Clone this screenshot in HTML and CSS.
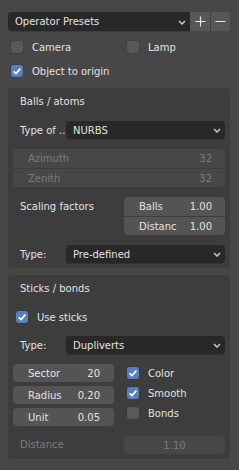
FILE: index.html
```html
<!DOCTYPE html>
<html>
<head>
<meta charset="utf-8">
<link rel="stylesheet" href="styles.css">
</head>
<body>
<div class="root">
  <div class="preset-row">
    <div class="dropdown preset">
      <span class="dd-text">Operator Presets</span>
      <svg class="chev" width="8" height="5" viewBox="0 0 8 5"><path d="M1 1 L4 4 L7 1" fill="none" stroke="#c8c8c8" stroke-width="1.5"/></svg>
    </div>
    <div class="tools">
      <div class="tool"><svg width="11" height="11" viewBox="0 0 11 11"><path d="M5.5 0.5 V10.5 M0.5 5.5 H10.5" stroke="#e6e6e6" stroke-width="1.2"/></svg></div>
      <div class="tool sep"><svg width="11" height="11" viewBox="0 0 11 11"><path d="M0.5 5.5 H10.5" stroke="#e6e6e6" stroke-width="1.2"/></svg></div>
    </div>
  </div>

  <div class="row two-col">
    <div class="check col-a"><span class="box"></span><span class="lbl">Camera</span></div>
    <div class="check"><span class="box"></span><span class="lbl">Lamp</span></div>
  </div>
  <div class="row">
    <div class="check"><span class="box on"><svg width="12" height="12" viewBox="0 0 12 12"><path d="M2.6 6.3 L5 8.6 L9.4 3.6" fill="none" stroke="#fff" stroke-width="1.7"/></svg></span><span class="lbl">Object to origin</span></div>
  </div>

  <section class="panel p1">
    <div class="ph">Balls / atoms</div>
    <div class="prop r-type">
      <div class="plabel">Type of ..</div>
      <div class="dropdown grow">
        <span class="dd-text">NURBS</span>
        <svg class="chev" width="8" height="5" viewBox="0 0 8 5"><path d="M1 1 L4 4 L7 1" fill="none" stroke="#c8c8c8" stroke-width="1.5"/></svg>
      </div>
    </div>
    <div class="stack dis r-az">
      <div class="num dis"><span>Azimuth</span><span>32</span></div>
      <div class="num dis"><span>Zenith</span><span>32</span></div>
    </div>
    <div class="prop r-scale">
      <div class="plabel wide">Scaling factors</div>
      <div class="stack grow">
        <div class="num"><span>Balls</span><span>1.00</span></div>
        <div class="num"><span>Distanc</span><span>1.00</span></div>
      </div>
    </div>
    <div class="prop r-type2">
      <div class="plabel">Type:</div>
      <div class="dropdown grow">
        <span class="dd-text">Pre-defined</span>
        <svg class="chev" width="8" height="5" viewBox="0 0 8 5"><path d="M1 1 L4 4 L7 1" fill="none" stroke="#c8c8c8" stroke-width="1.5"/></svg>
      </div>
    </div>
  </section>

  <section class="panel p2">
    <div class="ph">Sticks / bonds</div>
    <div class="row use">
      <div class="check"><span class="box on"><svg width="12" height="12" viewBox="0 0 12 12"><path d="M2.6 6.3 L5 8.6 L9.4 3.6" fill="none" stroke="#fff" stroke-width="1.7"/></svg></span><span class="lbl">Use sticks</span></div>
    </div>
    <div class="prop r-dup">
      <div class="plabel">Type:</div>
      <div class="dropdown grow">
        <span class="dd-text">Dupliverts</span>
        <svg class="chev" width="8" height="5" viewBox="0 0 8 5"><path d="M1 1 L4 4 L7 1" fill="none" stroke="#c8c8c8" stroke-width="1.5"/></svg>
      </div>
    </div>
    <div class="split">
      <div class="fields">
        <div class="num single"><span>Sector</span><span>20</span></div>
        <div class="num single"><span>Radius</span><span>0.20</span></div>
        <div class="num single"><span>Unit</span><span>0.05</span></div>
      </div>
      <div class="checks">
        <div class="check crow"><span class="box on"><svg width="12" height="12" viewBox="0 0 12 12"><path d="M2.6 6.3 L5 8.6 L9.4 3.6" fill="none" stroke="#fff" stroke-width="1.7"/></svg></span><span class="lbl">Color</span></div>
        <div class="check crow"><span class="box on"><svg width="12" height="12" viewBox="0 0 12 12"><path d="M2.6 6.3 L5 8.6 L9.4 3.6" fill="none" stroke="#fff" stroke-width="1.7"/></svg></span><span class="lbl">Smooth</span></div>
        <div class="check crow"><span class="box"></span><span class="lbl">Bonds</span></div>
      </div>
    </div>
    <div class="prop r-dist">
      <div class="plabel wide dimtext">Distance</div>
      <div class="num single dis center grow">1.10</div>
    </div>
  </section>
</div>
</body>
</html>
```

FILE: styles.css
```css
* { box-sizing: border-box; }
html, body {
  margin: 0;
  padding: 0;
  background: #474747;
}
body {
  font-family: "DejaVu Sans", "Liberation Sans", sans-serif;
  font-size: 10px;
  color: #e2e2e2;
  width: 239px;
  height: 470px;
  overflow: hidden;
}
.root {
  padding: 12px 9px 0 8px;
}
.preset-row {
  display: flex;
  height: 19px;
}
.dropdown {
  background: #282828;
  border-radius: 4px;
  height: 18px;
  display: flex;
  align-items: center;
  padding: 0 4px 0 7px;
  color: #e2e2e2;
  box-shadow: 0 1px 0 rgba(0,0,0,0.15);
}
.dropdown.preset {
  flex: 1;
  height: 19px;
  border-radius: 4px 0 0 4px;
}
.dd-text { flex: 1; white-space: nowrap; overflow: hidden; }
.chev { flex: none; margin-top: 1px; }
.tools {
  display: flex;
  width: 40px;
  border-radius: 0 4px 4px 0;
  overflow: hidden;
  background: #575757;
}
.tool {
  width: 20px;
  height: 19px;
  display: flex;
  align-items: center;
  justify-content: center;
  background: #575757;
}
.tool.sep { border-left: 1px solid #3e3e3e; }

.row {
  height: 24px;
  display: flex;
  align-items: center;
  padding-left: 3px;
}
.preset-row + .row { margin-top: 4px; }
.two-col .col-a { width: 116px; }
.check {
  display: flex;
  align-items: center;
}
.box {
  width: 12px;
  height: 12px;
  border-radius: 3px;
  background: #595959;
  box-shadow: 0 0 0 0.5px #3a3a3a;
  flex: none;
  display: flex;
}
.box.on { background: #5680c2; }
.lbl { margin-left: 9px; white-space: nowrap; }

.panel {
  background: #3d3d3d;
  border-radius: 4px;
  padding: 0 5px 5px 5px;
}
.p1 { margin-top: 5px; }
.p2 { margin-top: 7px; }
.ph {
  height: 28px;
  line-height: 28px;
  padding-left: 7px;
}
.prop {
  display: flex;
  align-items: center;
}
.plabel {
  width: 53px;
  padding-left: 7px;
  white-space: nowrap;
  flex: none;
}
.plabel.wide { width: 111px; align-self: flex-start; line-height: 19px; }
.grow { flex: 1; }
.r-type { margin-top: 5px; }
.stack {
  border-radius: 4px;
  overflow: hidden;
}
.num {
  height: 19px;
  background: #545454;
  display: flex;
  align-items: center;
  justify-content: space-between;
  padding: 0 13px 0 15px;
  white-space: nowrap;
  color: #e2e2e2;
}
.stack .num + .num { border-top: 1px solid #3d3d3d; height: 19px; }
.num.dis { background: #474747; color: #7c7c7c; }
.r-az { margin-top: 10px; }
.r-scale { margin-top: 10px; }
.r-type2 { margin-top: 10px; }
.use { margin-top: 4px; height: 20px; }
.r-dup { margin-top: 9px; }
.split {
  display: flex;
  margin-top: 9px;
}
.fields {
  width: 101px;
  padding-top: 1px;
  display: flex;
  flex-direction: column;
  gap: 4px;
}
.num.single {
  height: 18px;
  border-radius: 4px;
  padding: 0 14px 0 15px;
}
.checks {
  margin-left: 13px;
  display: flex;
  flex-direction: column;
}
.crow { height: 20px; }
.r-dist { margin-top: 10px; }
.r-dist .plabel.wide { line-height: 18px; }
.dimtext { color: #7c7c7c; }
.num.center { justify-content: center; padding: 0; }
```
